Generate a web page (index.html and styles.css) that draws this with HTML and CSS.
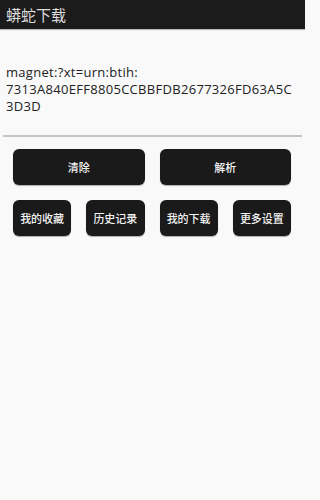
FILE: index.html
```html
<!DOCTYPE html>
<html lang="zh">
<head>
<meta charset="utf-8">
<link rel="stylesheet" href="styles.css">
</head>
<body>
<header class="titlebar">蟒蛇下载</header>
<main class="content">
  <div class="input-area">
    <div class="magnet">magnet:?xt=urn:btih:<br>7313A840EFF8805CCBBFDB2677326FD63A5C<br>3D3D</div>
  </div>
  <div class="divider"></div>
  <div class="actions">
    <button class="btn big">清除</button>
    <button class="btn big">解析</button>
  </div>
  <div class="menu">
    <button class="btn small">我的收藏</button>
    <button class="btn small">历史记录</button>
    <button class="btn small">我的下载</button>
    <button class="btn small">更多设置</button>
  </div>
</main>
</body>
</html>
```
FILE: styles.css
```css
html {
  background: #f9f9f9;
}
html, body {
  margin: 0;
  padding: 0;
}
body {
  width: 305px;
  min-height: 500px;
  background: #f9f9f9;
  font-family: "Open Sans", "Noto Sans CJK SC", sans-serif;
}
.titlebar {
  height: 29px;
  background: #1b1b1b;
  color: #dcdcdc;
  font-family: "Noto Sans CJK SC", sans-serif;
  font-size: 15px;
  line-height: 29px;
  padding-left: 6px;
  box-shadow: 0 1px 1px rgba(0,0,0,0.25);
}
.content {
  display: flex;
  flex-direction: column;
}
.input-area {
  padding: 35px 6px 0 6px;
  height: 71px;
}
.magnet {
  font-size: 13px;
  line-height: 17px;
  color: #222;
  letter-spacing: 0.3px;
}
.divider {
  height: 2px;
  margin: 0 3px;
  background: #c4c4c4;
}
.actions {
  display: grid;
  grid-template-columns: 1fr 1fr;
  gap: 15px;
  padding: 12px 14px 0 13px;
}
.menu {
  display: grid;
  grid-template-columns: repeat(4, 1fr);
  gap: 15px;
  padding: 15px 14px 0 13px;
}
.btn {
  height: 36px;
  border: none;
  border-radius: 6px;
  background: #1a1a1a;
  color: #f4f4f4;
  font-family: "Noto Sans CJK SC", sans-serif;
  font-size: 11px;
  font-weight: 500;
  padding: 0;
  box-shadow: 0 1px 1px rgba(0,0,0,0.3);
}
.small {
  font-size: 11px;
}
```
